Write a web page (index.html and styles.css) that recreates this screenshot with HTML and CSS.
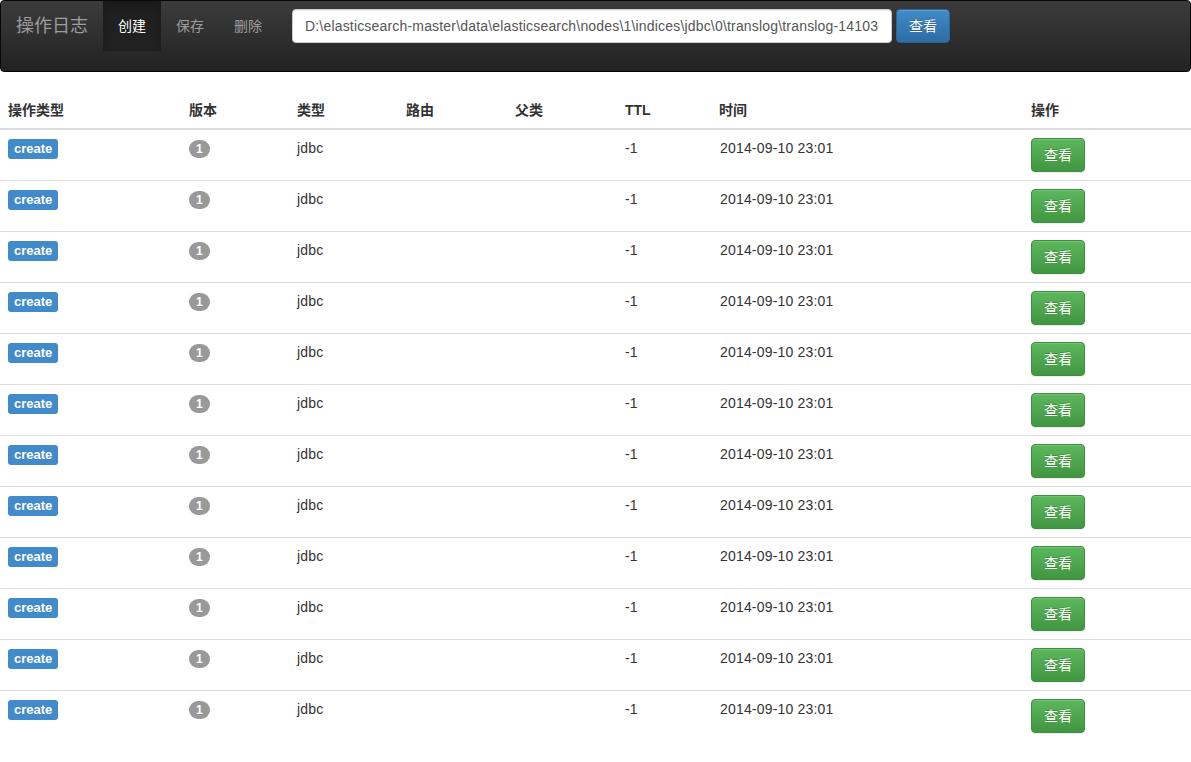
FILE: index.html
```html
<!DOCTYPE html>
<html lang="zh">
<head>
<meta charset="utf-8">
<title>操作日志</title>
<link rel="stylesheet" href="styles.css">
</head>
<body>
<nav class="navbar">
  <a class="brand" href="#">操作日志</a>
  <ul class="nav">
    <li class="active"><a href="#">创建</a></li>
    <li><a href="#">保存</a></li>
    <li><a href="#">删除</a></li>
  </ul>
  <form class="nav-form">
    <input class="path-input" type="text" value="D:\elasticsearch-master\data\elasticsearch\nodes\1\indices\jdbc\0\translog\translog-1410361234567">
    <button class="btn btn-primary" type="button">查看</button>
  </form>
</nav>
<table class="log-table">
  <colgroup>
    <col class="c1"><col class="c2"><col class="c3"><col class="c4"><col class="c5"><col class="c6"><col class="c7"><col class="c8">
  </colgroup>
  <thead>
    <tr><th>操作类型</th><th>版本</th><th>类型</th><th>路由</th><th>父类</th><th>TTL</th><th>时间</th><th>操作</th></tr>
  </thead>
  <tbody>
    <tr><td><span class="label">create</span></td><td><span class="badge">1</span></td><td>jdbc</td><td></td><td></td><td>-1</td><td>2014-09-10 23:01</td><td class="act"><button class="btn btn-success" type="button">查看</button></td></tr>
    <tr><td><span class="label">create</span></td><td><span class="badge">1</span></td><td>jdbc</td><td></td><td></td><td>-1</td><td>2014-09-10 23:01</td><td class="act"><button class="btn btn-success" type="button">查看</button></td></tr>
    <tr><td><span class="label">create</span></td><td><span class="badge">1</span></td><td>jdbc</td><td></td><td></td><td>-1</td><td>2014-09-10 23:01</td><td class="act"><button class="btn btn-success" type="button">查看</button></td></tr>
    <tr><td><span class="label">create</span></td><td><span class="badge">1</span></td><td>jdbc</td><td></td><td></td><td>-1</td><td>2014-09-10 23:01</td><td class="act"><button class="btn btn-success" type="button">查看</button></td></tr>
    <tr><td><span class="label">create</span></td><td><span class="badge">1</span></td><td>jdbc</td><td></td><td></td><td>-1</td><td>2014-09-10 23:01</td><td class="act"><button class="btn btn-success" type="button">查看</button></td></tr>
    <tr><td><span class="label">create</span></td><td><span class="badge">1</span></td><td>jdbc</td><td></td><td></td><td>-1</td><td>2014-09-10 23:01</td><td class="act"><button class="btn btn-success" type="button">查看</button></td></tr>
    <tr><td><span class="label">create</span></td><td><span class="badge">1</span></td><td>jdbc</td><td></td><td></td><td>-1</td><td>2014-09-10 23:01</td><td class="act"><button class="btn btn-success" type="button">查看</button></td></tr>
    <tr><td><span class="label">create</span></td><td><span class="badge">1</span></td><td>jdbc</td><td></td><td></td><td>-1</td><td>2014-09-10 23:01</td><td class="act"><button class="btn btn-success" type="button">查看</button></td></tr>
    <tr><td><span class="label">create</span></td><td><span class="badge">1</span></td><td>jdbc</td><td></td><td></td><td>-1</td><td>2014-09-10 23:01</td><td class="act"><button class="btn btn-success" type="button">查看</button></td></tr>
    <tr><td><span class="label">create</span></td><td><span class="badge">1</span></td><td>jdbc</td><td></td><td></td><td>-1</td><td>2014-09-10 23:01</td><td class="act"><button class="btn btn-success" type="button">查看</button></td></tr>
    <tr><td><span class="label">create</span></td><td><span class="badge">1</span></td><td>jdbc</td><td></td><td></td><td>-1</td><td>2014-09-10 23:01</td><td class="act"><button class="btn btn-success" type="button">查看</button></td></tr>
    <tr><td><span class="label">create</span></td><td><span class="badge">1</span></td><td>jdbc</td><td></td><td></td><td>-1</td><td>2014-09-10 23:01</td><td class="act"><button class="btn btn-success" type="button">查看</button></td></tr>
  </tbody>
</table>
</body>
</html>
```
FILE: styles.css
```css
* { box-sizing: border-box; }
html, body { margin: 0; padding: 0; }
body {
  font-family: "Liberation Sans", "Noto Sans CJK SC", sans-serif;
  font-size: 14px;
  line-height: 20px;
  color: #333;
  background: #fff;
}
a { text-decoration: none; }

.navbar {
  display: flex;
  align-items: flex-start;
  height: 72px;
  border: 1px solid #080808;
  border-radius: 4px;
  background: linear-gradient(to bottom, #3c3c3c 0%, #222 100%);
  margin-bottom: 20px;
}
.brand {
  display: block;
  height: 50px;
  padding: 15px;
  font-size: 18px;
  line-height: 20px;
  color: #9d9d9d;
}
.nav {
  display: flex;
  list-style: none;
  margin: 0;
  padding: 0;
}
.nav a {
  display: block;
  padding: 15px;
  line-height: 20px;
  color: #9d9d9d;
}
.nav .active a {
  color: #fff;
  background: linear-gradient(to bottom, #1e1e1e 0%, #222 100%);
  box-shadow: inset 0 3px 9px rgba(0,0,0,.2);
}
.nav-form {
  display: flex;
  gap: 4px;
  padding: 8px 15px 0;
  margin: 0;
}
.path-input {
  width: 600px;
  height: 34px;
  padding: 6px 12px;
  font: 14px/20px "Liberation Sans", "Noto Sans CJK SC", sans-serif;
  letter-spacing: 0.18px;
  color: #555;
  background: #fff;
  border: 1px solid #ccc;
  border-radius: 4px;
  box-shadow: inset 0 1px 1px rgba(0,0,0,.075);
  outline: none;
}
.btn {
  display: inline-block;
  height: 34px;
  padding: 6px 12px;
  font: 14px/20px "Liberation Sans", "Noto Sans CJK SC", sans-serif;
  color: #fff;
  border: 1px solid transparent;
  border-radius: 4px;
  cursor: pointer;
  box-shadow: inset 0 1px 0 rgba(255,255,255,.15), 0 1px 1px rgba(0,0,0,.075);
  text-shadow: 0 -1px 0 rgba(0,0,0,.2);
}
.btn-primary {
  background: linear-gradient(to bottom, #428bca 0%, #2d6ca2 100%);
  border-color: #2b669a;
}
.btn-success {
  background: linear-gradient(to bottom, #5cb85c 0%, #419641 100%);
  border-color: #3e8f3e;
}

.log-table {
  width: 100%;
  table-layout: fixed;
  border-collapse: collapse;
  border-spacing: 0;
  margin-bottom: 20px;
}
.c1 { width: 181px; }
.c2 { width: 108px; }
.c3 { width: 109px; }
.c4 { width: 109px; }
.c5 { width: 110px; }
.c6 { width: 94px; }
.c7 { width: 312px; }
.c8 { width: 168px; }
.log-table th {
  text-align: left;
  font-weight: bold;
  padding: 8px;
  line-height: 20px;
  vertical-align: bottom;
  border-bottom: 2px solid #ddd;
}
.log-table td {
  padding: 8px;
  line-height: 20px;
  letter-spacing: 0.18px;
  vertical-align: top;
  border-top: 1px solid #ddd;
}
.log-table td:nth-child(7) { padding-left: 9px; }
.log-table tbody tr:first-child td { border-top: 0; }

.label {
  display: inline-block;
  height: 20px;
  padding: 0 6px;
  margin-top: 1px;
  font-size: 13px;
  font-weight: bold;
  line-height: 20px;
  letter-spacing: 0;
  color: #fff;
  background: #428bca;
  border-radius: 3px;
  vertical-align: top;
}
.badge {
  display: inline-block;
  min-width: 10px;
  padding: 3px 7px;
  margin-top: 2px;
  font-size: 12px;
  font-weight: bold;
  line-height: 12px;
  letter-spacing: 0;
  color: #fff;
  text-align: center;
  background: #999;
  border-radius: 10px;
  vertical-align: top;
}
.btn-success { letter-spacing: 0; }
```
